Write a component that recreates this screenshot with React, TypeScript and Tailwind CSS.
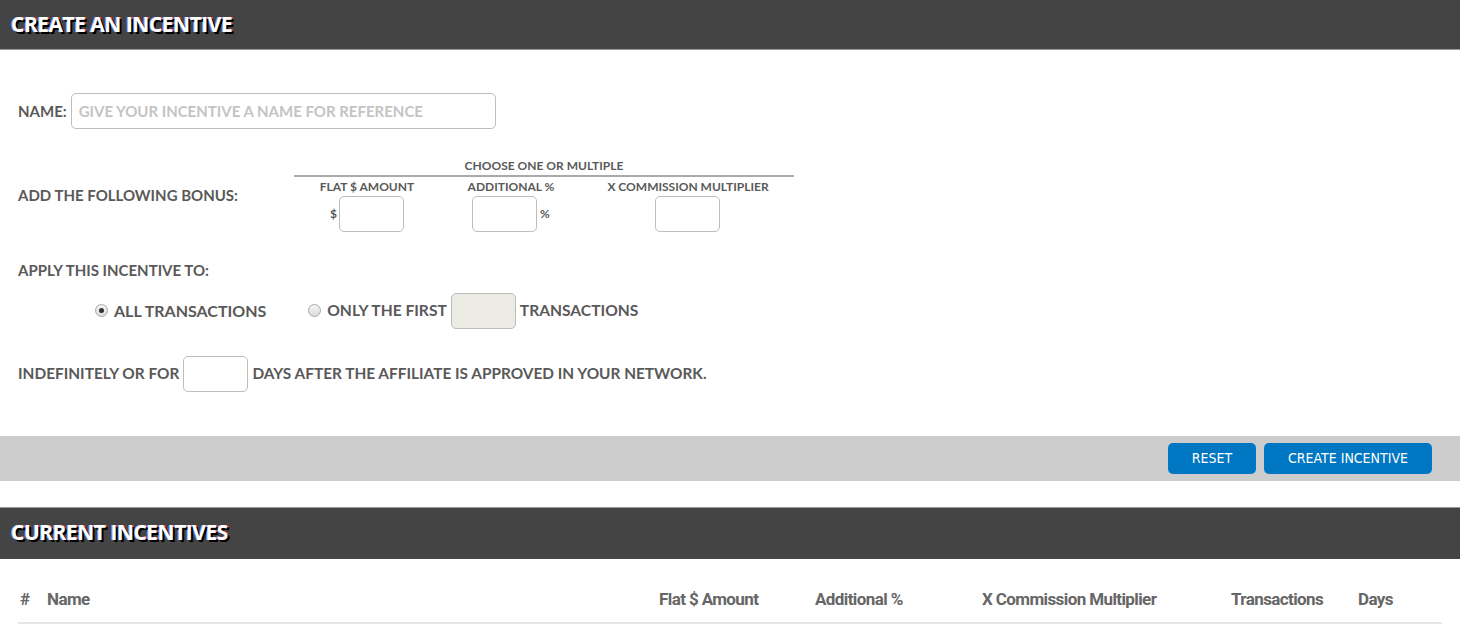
import React from "react";

const Radio = ({ checked }: { checked?: boolean }) => (
  <span className="inline-flex h-[13px] w-[13px] items-center justify-center rounded-full border border-[#a9a9a9] bg-gradient-to-b from-[#f4f4f4] to-[#dcdcdc]">
    {checked && <span className="h-[5px] w-[5px] rounded-full bg-[#333]" />}
  </span>
);

const SmallBox = ({ disabled }: { disabled?: boolean }) => (
  <div
    className={`h-[36px] w-[65px] rounded-[5px] border border-[#bdbdbd] ${
      disabled ? "bg-[#ebebe4]" : "bg-white"
    }`}
  />
);

export default function App() {
  const label = "font-['Lato',sans-serif] font-bold text-[#595959]";
  const title =
    "font-['Open_Sans',sans-serif] font-bold text-white text-[21px] tracking-[-0.5px] [text-shadow:2px_2px_0_#000,-1px_0_0_#7aa0ff,1px_0_0_#ff3030]";
  const th = "font-['Roboto',sans-serif] font-bold text-[17px] leading-[24px] text-[#666] tracking-[-0.6px]";
  return (
    <div className="w-[1460px] bg-white">
      <div className="flex h-[50px] items-center border-b border-[#999] bg-[#444] pl-[11px]">
        <span className={title}>CREATE AN INCENTIVE</span>
      </div>

      <div className="pl-[18px]">
        <div className="flex items-center gap-[4px] pt-[43px]">
          <span className={`${label} text-[15px]`}>NAME:</span>
          <div className="flex h-[36px] w-[425px] items-center rounded-[5px] border border-[#bdbdbd] pl-[7px]">
            <span className="font-['Lato',sans-serif] text-[15px] font-bold text-[#c4c4c4]">
              GIVE YOUR INCENTIVE A NAME FOR REFERENCE
            </span>
          </div>
        </div>

        <div className="mt-[29px] flex items-center">
          <span className={`${label} w-[276px] text-[15px]`}>ADD THE FOLLOWING BONUS:</span>
          <div className="w-[500px]">
            <div className={`${label} border-b-2 border-[#aaa] pb-[1px] text-center text-[12px] leading-[16px]`}>
              CHOOSE ONE OR MULTIPLE
            </div>
            <div className="mt-[1px] flex">
              <div className="flex w-[146px] flex-col items-center">
                <span className={`${label} text-[12px] leading-[18px]`}>FLAT $ AMOUNT</span>
                <div className="flex items-center gap-[2px]">
                  <span className={`${label} text-[12px]`}>$</span>
                  <SmallBox />
                </div>
              </div>
              <div className="flex w-[142px] flex-col items-center">
                <span className={`${label} text-[12px] leading-[18px]`}>ADDITIONAL %</span>
                <div className="flex items-center gap-[3px]">
                  <SmallBox />
                  <span className={`${label} text-[12px]`}>%</span>
                </div>
              </div>
              <div className="flex w-[212px] flex-col items-center">
                <span className={`${label} text-[12px] leading-[18px]`}>X COMMISSION MULTIPLIER</span>
                <div className="pr-[1px]">
                  <SmallBox />
                </div>
              </div>
            </div>
          </div>
        </div>

        <div className={`${label} mt-[27px] text-[15px]`}>APPLY THIS INCENTIVE TO:</div>

        <div className="mt-[11px] flex items-center pl-[77px]">
          <Radio checked />
          <span className={`${label} ml-[6px] text-[16px]`}>ALL TRANSACTIONS</span>
          <span className="ml-[42px]">
            <Radio />
          </span>
          <span className={`${label} ml-[6px] text-[15.6px]`}>ONLY THE FIRST</span>
          <span className="ml-[4px]">
            <SmallBox disabled />
          </span>
          <span className={`${label} ml-[4px] text-[15.6px]`}>TRANSACTIONS</span>
        </div>

        <div className="mt-[27px] flex items-center">
          <span className={`${label} text-[15.4px]`}>INDEFINITELY OR FOR</span>
          <span className="ml-[4px]">
            <SmallBox />
          </span>
          <span className={`${label} ml-[4px] text-[15.4px]`}>
            DAYS AFTER THE AFFILIATE IS APPROVED IN YOUR NETWORK.
          </span>
        </div>
      </div>

      <div className="mt-[44px] flex h-[45px] items-center justify-end gap-[8px] bg-[#cccccc] pr-[28px]">
        <button className="h-[31px] w-[88px] rounded-[5px] bg-[#0077c2] font-['DejaVu_Sans_Condensed',sans-serif] text-[14px] text-white">
          RESET
        </button>
        <button className="h-[31px] w-[168px] rounded-[5px] bg-[#0077c2] font-['DejaVu_Sans_Condensed',sans-serif] text-[14px] text-white">
          CREATE INCENTIVE
        </button>
      </div>

      <div className="mt-[26px] flex h-[52px] items-center border-t border-[#999] bg-[#444] pl-[11px]">
        <span className={title}>CURRENT INCENTIVES</span>
      </div>

      <div className="mx-[18px] mt-[28px] flex items-center border-b-2 border-[#e6e6e6] pb-[11px]">
        <span className={`${th} w-[29px] pl-[2px] text-[12px]`}>#</span>
        <span className={`${th} w-[612px]`}>Name</span>
        <span className={`${th} w-[156px]`}>Flat $ Amount</span>
        <span className={`${th} w-[167px]`}>Additional %</span>
        <span className={`${th} w-[249px]`}>X Commission Multiplier</span>
        <span className={`${th} w-[127px]`}>Transactions</span>
        <span className={th}>Days</span>
      </div>
    </div>
  );
}
